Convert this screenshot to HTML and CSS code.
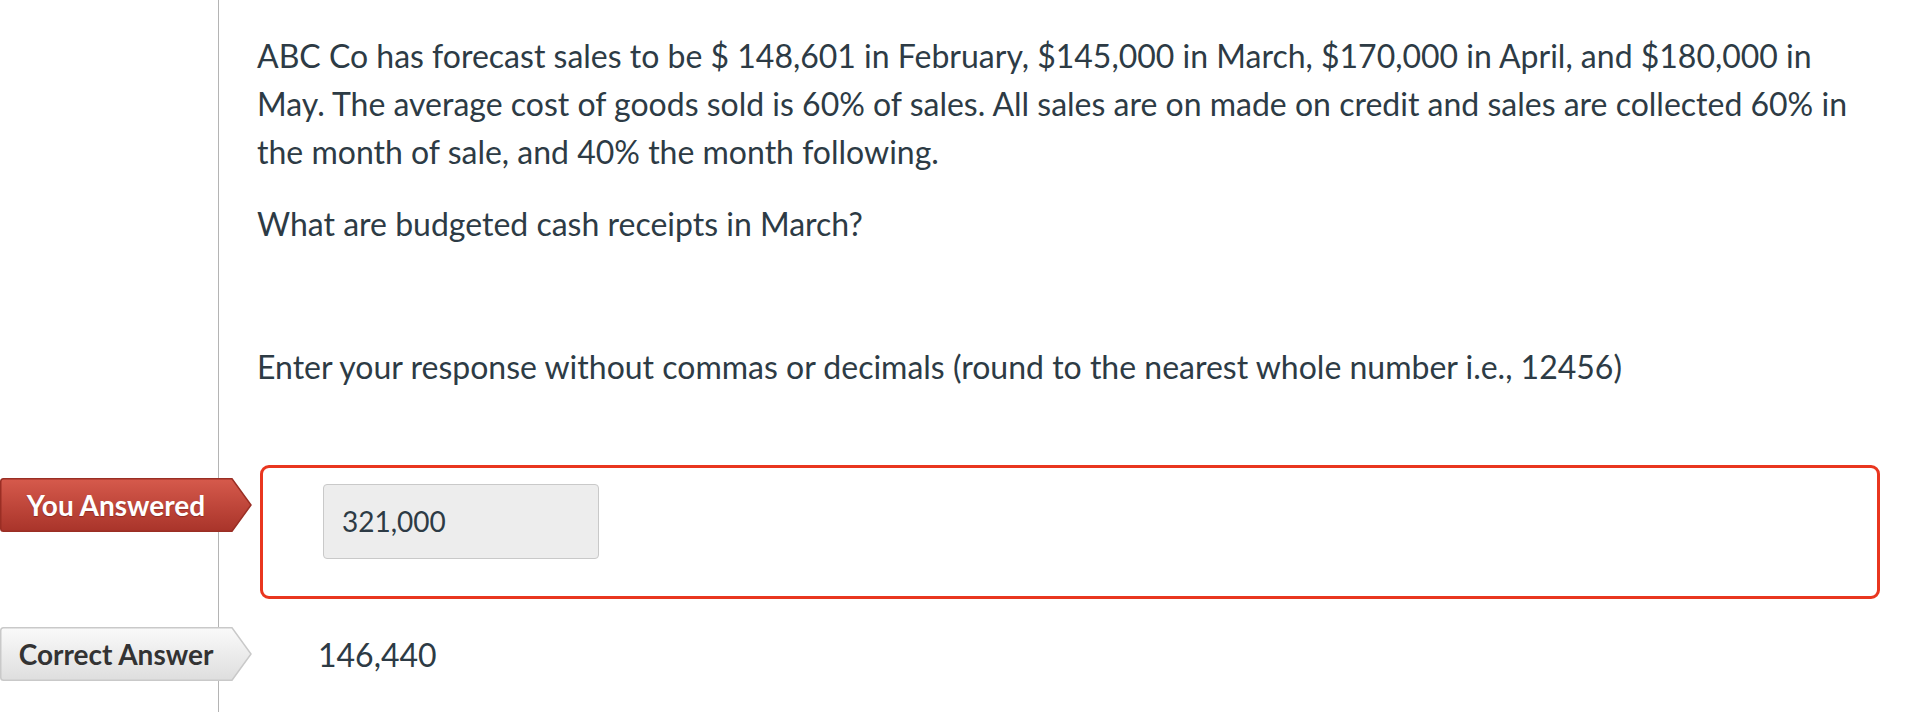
FILE: index.html
```html
<!DOCTYPE html>
<html lang="en">
<head>
<meta charset="utf-8">
<title>Quiz Question</title>
<link rel="stylesheet" href="styles.css">
</head>
<body>
<div class="page">
  <div class="gutter"></div>
  <div class="content question">
    <p class="p1">ABC Co has forecast sales to be $ 148,601 in February, $145,000 in March, $170,000 in April, and $180,000 in May. The average cost of goods sold is 60% of sales. All sales are on made on credit and sales are collected 60% in the month of sale, and 40% the month following.</p>
    <p class="p2">What are budgeted cash receipts in March?</p>
    <p class="p3">Enter your response without commas or decimals (round to the nearest whole number i.e., 12456)</p>
  </div>

  <div class="gutter answer-gutter">
    <div class="badge badge-wrong">
      <svg class="badge-bg" viewBox="0 0 252 54" preserveAspectRatio="none">
        <defs>
          <linearGradient id="gRed" x1="0" y1="0" x2="0" y2="1">
            <stop offset="0" stop-color="#d65a4c"/>
            <stop offset="1" stop-color="#a9342a"/>
          </linearGradient>
        </defs>
        <path d="M3.5,0.75 H232 L251,27 L232,53.25 H3.5 Q0.75,53.25 0.75,50.5 V3.5 Q0.75,0.75 3.5,0.75 Z" fill="url(#gRed)" stroke="#9a2e24" stroke-width="1.5"/>
      </svg>
      <span class="badge-text">You Answered</span>
    </div>
  </div>
  <div class="content answer">
    <div class="answer-box">
      <div class="answer-input">321,000</div>
    </div>
  </div>

  <div class="gutter correct-gutter">
    <div class="badge badge-correct">
      <svg class="badge-bg" viewBox="0 0 252 54" preserveAspectRatio="none">
        <defs>
          <linearGradient id="gGray" x1="0" y1="0" x2="0" y2="1">
            <stop offset="0" stop-color="#fafafa"/>
            <stop offset="1" stop-color="#dedede"/>
          </linearGradient>
        </defs>
        <path d="M3.5,0.75 H232 L251,27 L232,53.25 H3.5 Q0.75,53.25 0.75,50.5 V3.5 Q0.75,0.75 3.5,0.75 Z" fill="url(#gGray)" stroke="#c9c9c9" stroke-width="1.5"/>
      </svg>
      <span class="badge-text">Correct Answer</span>
    </div>
  </div>
  <div class="content correct">
    <div class="correct-value">146,440</div>
  </div>
</div>
</body>
</html>
```

FILE: styles.css
```css
html, body {
  margin: 0;
  padding: 0;
  background: #ffffff;
}

body {
  font-family: Lato, "Open Sans", "Liberation Sans", sans-serif;
  color: #2d3b45;
  font-size: 32px;
  line-height: 48px;
}

.page {
  display: grid;
  grid-template-columns: 218px 1fr;
  grid-template-rows: auto auto 1fr;
  align-content: start;
  height: 712px;
  overflow: hidden;
}

.gutter {
  position: relative;
  z-index: 2;
}

.content {
  border-left: 1px solid #b4b4b4;
}

.question {
  padding: 32px 0 0 38px;
}

.question p {
  margin: 0;
  max-width: 1600px;
}

.question .p2 {
  margin-top: 24px;
}

.question .p3 {
  margin-top: 95px;
}

.answer-gutter {
  padding-top: 87px;
}

.answer {
  padding: 74px 26px 0 41px;
}

.answer-box {
  border: 3px solid #e9361f;
  border-radius: 9px;
  padding: 16px 0 37px 60px;
}

.answer-input {
  box-sizing: content-box;
  width: 256px;
  height: 73px;
  padding: 0 0 0 18px;
  border: 1px solid #c9c9c9;
  border-radius: 4px;
  background: #ededed;
  font-size: 28px;
  line-height: 73px;
  color: #2d3b45;
}

.correct-gutter {
  padding-top: 28px;
}

.correct {
  padding: 32px 0 0 99px;
}

.correct-value {
  font-size: 32px;
  line-height: 48px;
}

.badge {
  position: relative;
  width: 252px;
  height: 54px;
}

.badge-bg {
  position: absolute;
  left: 0;
  top: 0;
  width: 252px;
  height: 54px;
  display: block;
}

.badge-text {
  position: relative;
  display: block;
  width: 232px;
  text-align: center;
  font-weight: 700;
  font-size: 28px;
  line-height: 54px;
  white-space: nowrap;
}

.badge-wrong .badge-text {
  color: #ffffff;
  text-shadow: 0 1px 1px rgba(90, 20, 15, 0.45);
}

.badge-correct .badge-text {
  color: #333333;
}
```
